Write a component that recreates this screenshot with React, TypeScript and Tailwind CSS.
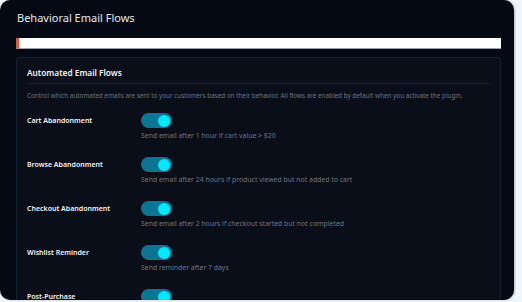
import React, { useState } from 'react';

const FLOWS = [
  { id: 'cart', label: 'Cart Abandonment', desc: 'Send email after 1 hour if cart value > $20' },
  { id: 'browse', label: 'Browse Abandonment', desc: 'Send email after 24 hours if product viewed but not added to cart' },
  { id: 'checkout', label: 'Checkout Abandonment', desc: 'Send email after 2 hours if checkout started but not completed' },
  { id: 'wishlist', label: 'Wishlist Reminder', desc: 'Send reminder after 7 days' },
  { id: 'post', label: 'Post-Purchase', desc: 'Send follow-up after delivery' },
];

const Toggle = ({ on, onChange }: { on: boolean; onChange: () => void }) => (
  <button
    onClick={onChange}
    className={'relative w-[31px] h-[15px] rounded-full shrink-0 transition-colors ' + (on ? 'bg-[#0b7592]' : 'bg-[#2a3342]')}
  >
    <span
      className={'absolute top-[1.5px] w-[12px] h-[12px] rounded-full transition-all ' + (on ? 'left-[17px] bg-[#00e8ff]' : 'left-[2px] bg-[#9aa4b2]')}
    />
  </button>
);

export default function App() {
  const [enabled, setEnabled] = useState<Record<string, boolean>>({
    cart: true, browse: true, checkout: true, wishlist: true, post: true,
  });

  return (
    <div className="w-[522px] h-[302px] bg-[#eef7fb] overflow-hidden" style={{ fontFamily: '"Noto Sans", "Open Sans", sans-serif' }}>
      <div className="w-[514px] h-[300px] rounded-[10px] bg-[#050913] overflow-hidden pt-[10px] pl-[16px] pr-[13px] flex flex-col shadow-[1px_0_2px_rgba(0,0,0,0.25)]">
        <h1 className="text-[11px] leading-[16px] text-[#e6e9ee] pl-[1px]">Behavioral Email Flows</h1>

        <div className="mt-[12px] h-[11px] bg-white border-l-[3px] border-[#d9573a] border-b border-b-[#9ca3af] shrink-0" />

        <div className="mt-[8px] flex-1 rounded-t-[4px] border border-[#152030] border-b-0 bg-[#0a0e18] px-[10px] pt-[9px]">
          <div className="text-[8.3px] leading-[12px] font-semibold text-[#f1f3f6] pb-[4px] border-b border-[#1a2230]">
            Automated Email Flows
          </div>
          <p className="mt-[7px] text-[6.35px] leading-[10px] text-[#6b7686]">
            Control which automated emails are sent to your customers based on their behavior. All flows are enabled by default when you activate the plugin.
          </p>

          <div className="mt-[12px] flex flex-col gap-[16px]">
            {FLOWS.map((f) => (
              <div key={f.id} className="flex">
                <div className="w-[114px] shrink-0 h-[15px] flex items-center pt-[2px] text-[7px] font-semibold text-[#f1f3f6]">
                  {f.label}
                </div>
                <div className="flex flex-col">
                  <Toggle on={enabled[f.id]} onChange={() => setEnabled({ ...enabled, [f.id]: !enabled[f.id] })} />
                  <span className="mt-[3px] text-[6.9px] leading-[10px] text-[#6b7686]">{f.desc}</span>
                </div>
              </div>
            ))}
          </div>
        </div>
      </div>
    </div>
  );
}
